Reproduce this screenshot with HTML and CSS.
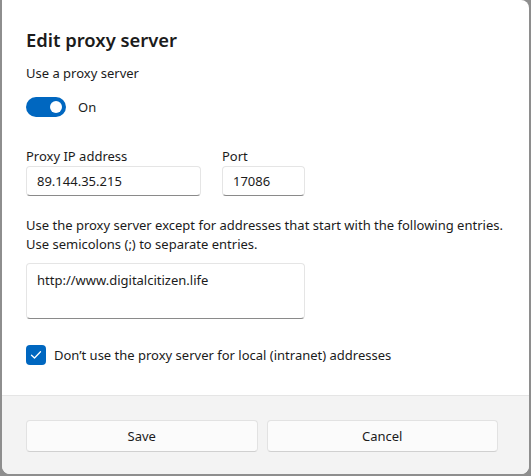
FILE: index.html
```html
<!DOCTYPE html>
<html>
<head>
<meta charset="utf-8">
<link rel="stylesheet" href="styles.css">
</head>
<body>
<div class="dialog">
  <div class="content">
    <h1 class="title">Edit proxy server</h1>
    <div class="label">Use a proxy server</div>
    <div class="toggle-row">
      <span class="toggle"><span class="thumb"></span></span>
      <span class="toggle-text">On</span>
    </div>
    <div class="fields">
      <div class="field">
        <div class="label">Proxy IP address</div>
        <div class="input ip">89.144.35.215</div>
      </div>
      <div class="field">
        <div class="label">Port</div>
        <div class="input port">17086</div>
      </div>
    </div>
    <p class="desc">Use the proxy server except for addresses that start with the following entries.<br>Use semicolons (;) to separate entries.</p>
    <div class="input area">http://www.digitalcitizen.life</div>
    <div class="check-row">
      <span class="checkbox">
        <svg width="12" height="10" viewBox="0 0 12 10"><path d="M1.5 5.2 L4.5 8 L10.5 1.8" fill="none" stroke="#fff" stroke-width="1.3" stroke-linecap="round" stroke-linejoin="round"/></svg>
      </span>
      <span class="check-text">Don’t use the proxy server for local (intranet) addresses</span>
    </div>
  </div>
  <div class="footer">
    <button class="btn">Save</button>
    <button class="btn">Cancel</button>
  </div>
</div>
</body>
</html>
```
FILE: styles.css
```css
html, body {
  margin: 0;
  padding: 0;
  background: #8e8e8e;
  height: 476px;
  overflow: hidden;
}
body {
  font-family: "Noto Sans", "Open Sans", sans-serif;
  color: #1b1b1b;
  font-size: 13px;
}
.dialog {
  margin-left: 2px;
  width: 527px;
  height: 474px;
  background: #ffffff;
  border-radius: 0 8px 8px 8px;
  overflow: hidden;
  display: flex;
  flex-direction: column;
}
.content {
  flex: 1;
  padding: 26px 24px 0 24px;
  white-space: nowrap;
}
.title {
  margin: 0;
  font-size: 18.4px;
  font-weight: 600;
  line-height: 28px;
}
.label {
  line-height: 20px;
}
.content > .label {
  margin-top: 9px;
}
.toggle-row {
  display: flex;
  align-items: center;
  margin-top: 14px;
  height: 20px;
}
.toggle {
  width: 40px;
  height: 20px;
  border-radius: 10px;
  background: #0067c0;
  position: relative;
  display: inline-block;
}
.thumb {
  position: absolute;
  width: 12px;
  height: 12px;
  border-radius: 50%;
  background: #fff;
  right: 4px;
  top: 4px;
}
.toggle-text {
  margin-left: 12px;
}
.fields {
  display: flex;
  gap: 21px;
  margin-top: 29px;
}
.input {
  box-sizing: border-box;
  border: 1px solid #e5e5e5;
  border-bottom: 1px solid #8a8a8a;
  border-radius: 4px;
  background: #fff;
  padding: 0 10px;
  line-height: 28px;
}
.field .input {
  margin-top: 0;
  height: 30px;
}
.ip { width: 175px; }
.port { width: 83px; }
.desc {
  margin: 20px 0 0 0;
  line-height: 19px;
}
.area {
  width: 279px;
  height: 56px;
  margin-top: 9px;
  padding-top: 2px;
}
.check-row {
  display: flex;
  align-items: center;
  margin-top: 26px;
}
.checkbox {
  width: 20px;
  height: 20px;
  border-radius: 4px;
  background: #0067c0;
  display: flex;
  align-items: center;
  justify-content: center;
}
.check-text {
  margin-left: 8px;
}
.footer {
  height: 79px;
  box-sizing: border-box;
  background: #f3f3f3;
  border-top: 1px solid #e5e5e5;
  padding: 24px 31px 0 24px;
  display: flex;
  gap: 9px;
}
.btn {
  flex: 1;
  height: 32px;
  background: #fbfbfb;
  border: 1px solid #e2e2e2;
  border-bottom-color: #d0d0d0;
  border-radius: 4px;
  font-family: inherit;
  font-size: 13px;
  color: #1b1b1b;
}
```
